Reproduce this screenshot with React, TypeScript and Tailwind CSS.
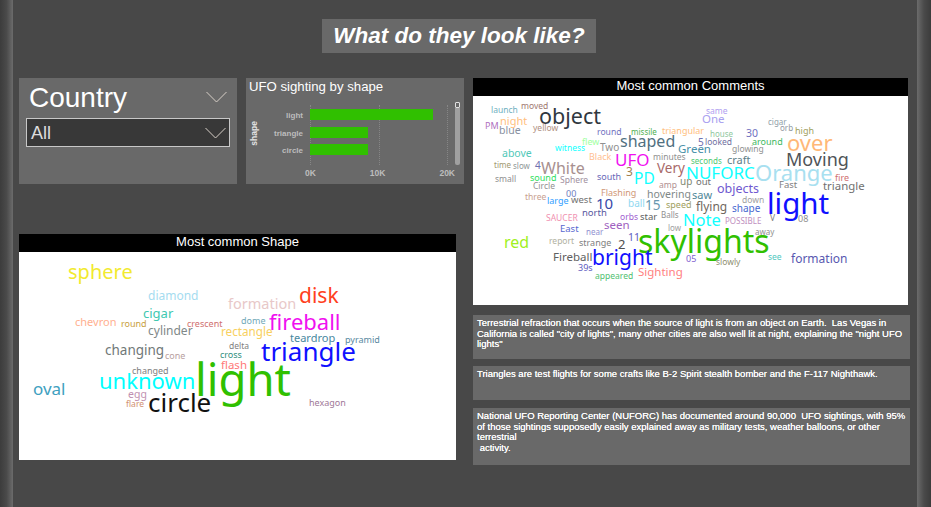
import type { ReactNode } from "react";

type Word = [string, number, number, number, string];

const shapeWords: Word[] = [
  ["sphere", 68, 272, 20, "#f2ea30"],
  ["diamond", 148, 296, 12, "#a5dcf0"],
  ["formation", 228, 303, 14.5, "#e8c8c8"],
  ["disk", 299, 295, 21, "#ff4020"],
  ["cigar", 143, 313, 13, "#40c8b0"],
  ["chevron", 75, 321, 11, "#ffb090"],
  ["round", 121, 323, 9, "#c8a040"],
  ["crescent", 187, 323, 9, "#d07070"],
  ["cylinder", 148, 331, 12, "#808888"],
  ["rectangle", 221, 332, 11.7, "#f8d060"],
  ["dome", 241, 320, 9, "#70a8b8"],
  ["fireball", 269, 321, 22, "#f010f0"],
  ["teardrop", 290, 337, 11, "#4888a0"],
  ["pyramid", 345, 339, 9, "#5888a0"],
  ["delta", 229, 346, 8.5, "#808080"],
  ["cross", 220, 354, 9, "#309080"],
  ["flash", 221, 365, 11.5, "#ff7878"],
  ["changing", 105, 351, 13.5, "#707878"],
  ["cone", 165, 355, 9, "#b8a0a0"],
  ["triangle", 261, 351, 26, "#1010ff"],
  ["changed", 132, 370, 9, "#808080"],
  ["unknown", 99, 380, 22, "#00ffff"],
  ["light", 195, 379, 45.5, "#30c000"],
  ["oval", 33, 388, 17, "#40a0c0"],
  ["egg", 128, 394, 10.5, "#c090b0"],
  ["flare", 126, 404, 8.5, "#d09070"],
  ["circle", 148, 402, 26, "#111111"],
  ["hexagon", 309, 402, 9, "#a07898"],
];

const commentWords: Word[] = [
  ["launch", 491, 110, 8.5, "#70b0c0"],
  ["moved", 521, 106, 8.5, "#a07870"],
  ["object", 539, 116, 21.5, "#303840"],
  ["night", 500, 120, 11, "#ffc080"],
  ["PM", 485, 125, 9, "#b070c0"],
  ["blue", 499, 130, 10.5, "#8890a0"],
  ["yellow", 533, 128, 8.5, "#b09080"],
  ["round", 597, 132, 8.6, "#7070c0"],
  ["missile", 631, 132, 8, "#50b050"],
  ["triangular", 662, 130, 9, "#ffc080"],
  ["flew", 582, 141, 9, "#a0ffa0"],
  ["witness", 555, 148, 8.5, "#10ffff"],
  ["Two", 600, 147, 10, "#909090"],
  ["shaped", 620, 141, 16, "#507080"],
  ["Green", 678, 149, 11.5, "#4890a8"],
  ["5", 698, 142, 10, "#7070b0"],
  ["looked", 705, 142, 8.5, "#7070a0"],
  ["same", 706, 111, 8.5, "#b0a0f0"],
  ["One", 702, 119, 11.5, "#a8a0f0"],
  ["cigar", 768, 122, 8, "#90a0a8"],
  ["orb", 780, 128, 8, "#9098a0"],
  ["high", 795, 130, 9, "#a0a060"],
  ["house", 710, 134, 8, "#90c8a0"],
  ["30", 746, 133, 10.5, "#7070c0"],
  ["around", 752, 141, 9, "#40b860"],
  ["over", 787, 142, 22, "#ffb878"],
  ["glowing", 732, 149, 8.5, "#909090"],
  ["seconds", 691, 161, 8, "#50c870"],
  ["craft", 727, 159, 11, "#608088"],
  ["Moving", 786, 159, 18, "#505458"],
  ["above", 502, 153, 10.5, "#50c8b8"],
  ["time", 494, 165, 8, "#a09870"],
  ["slow", 513, 166, 8, "#909898"],
  ["4", 535, 165, 10, "#7070b0"],
  ["White", 541, 168, 16, "#a89090"],
  ["Black", 589, 156, 9, "#ffc090"],
  ["UFO", 615, 159, 17, "#f010f0"],
  ["minutes", 653, 157, 8.5, "#909090"],
  ["Very", 657, 169, 13.5, "#a86868"],
  ["3", 626, 172, 12, "#a08050"],
  ["PD", 634, 179, 15.5, "#10ffff"],
  ["NUFORC", 686, 172, 17, "#10ffff"],
  ["Orange", 755, 172, 22, "#a8e0f0"],
  ["fire", 835, 177, 9, "#d07070"],
  ["Fast", 779, 185, 9.5, "#808080"],
  ["triangle", 823, 186, 11.4, "#707070"],
  ["up", 680, 181, 10, "#808870"],
  ["amp", 659, 185, 8.5, "#b09090"],
  ["out", 696, 182, 9.5, "#707070"],
  ["small", 495, 179, 8.5, "#909090"],
  ["sound", 530, 177, 9, "#30e060"],
  ["Sphere", 560, 180, 8.5, "#a090a0"],
  ["south", 597, 176, 9, "#6868b8"],
  ["Circle", 533, 186, 8.5, "#909090"],
  ["objects", 717, 189, 12.5, "#7058d0"],
  ["light", 767, 203, 29.5, "#1010ff"],
  ["down", 742, 200, 8.5, "#a0a0a0"],
  ["flying", 696, 207, 12, "#706860"],
  ["shape", 732, 208, 10, "#4868d0"],
  ["saw", 692, 194, 11, "#508898"],
  ["hovering", 647, 194, 10.5, "#808888"],
  ["Flashing", 601, 192, 9, "#d09878"],
  ["00", 566, 193, 9, "#7080c0"],
  ["three", 525, 197, 8.5, "#c8a090"],
  ["large", 547, 200, 9, "#30a0ff"],
  ["west", 571, 200, 9.5, "#707070"],
  ["10", 596, 203, 15, "#3848a8"],
  ["ball", 628, 203, 10, "#90d8f0"],
  ["15", 645, 206, 13.5, "#6898b0"],
  ["speed", 666, 204, 9, "#a0a060"],
  ["SAUCER", 546, 218, 8.5, "#f090b0"],
  ["north", 582, 213, 9.5, "#5858a0"],
  ["orbs", 620, 217, 8.5, "#a060d0"],
  ["star", 640, 217, 9.5, "#606060"],
  ["Balls", 661, 215, 8, "#909090"],
  ["Note", 683, 220, 16.5, "#10ffff"],
  ["POSSIBLE", 725, 221, 8, "#c090c0"],
  ["V", 770, 218, 8.5, "#808080"],
  ["08", 798, 218, 9, "#909090"],
  ["skylights", 638, 241, 32, "#30c000"],
  ["seen", 604, 225, 11.5, "#a060c0"],
  ["low", 668, 228, 8, "#a0a0a0"],
  ["away", 755, 232, 8, "#909090"],
  ["East", 560, 229, 9.5, "#5868d0"],
  ["near", 586, 232, 8, "#9090d0"],
  ["11", 628, 237, 10.5, "#6060c0"],
  ["2", 618, 244, 13, "#505050"],
  ["red", 504, 242, 16, "#a0f020"],
  ["report", 549, 241, 8.5, "#b0b0a0"],
  ["strange", 579, 242, 9, "#808080"],
  ["Fireball", 553, 257, 11.5, "#606060"],
  ["bright", 592, 257, 21, "#1010ff"],
  ["05", 686, 258, 9, "#8060d0"],
  ["slowly", 716, 262, 8.5, "#909070"],
  ["see", 768, 257, 8.5, "#50c8c0"],
  ["formation", 791, 259, 12, "#5858b0"],
  ["39s", 578, 267, 9, "#6060c0"],
  ["appeared", 595, 276, 8.5, "#50c070"],
  ["Sighting", 638, 272, 11.5, "#ff8080"],
];

const bars = [
  { label: "light", width: 123 },
  { label: "triangle", width: 58 },
  { label: "circle", width: 58 },
];

const WordCloud = ({ words, originX, originY }: { words: Word[]; originX: number; originY: number }) => (
  <div className="relative flex-1 bg-white font-['Noto_Sans',sans-serif]">
    {words.map(([text, x, y, size, color]) => (
      <span
        key={text}
        className="absolute -translate-y-1/2 whitespace-nowrap leading-none"
        style={{ left: x - originX, top: y - originY, fontSize: size, color }}
      >
        {text}
      </span>
    ))}
  </div>
);

const CardHeader = ({ title }: { title: string }) => (
  <div className="h-[18px] bg-black text-center text-[13px] leading-[16px] text-white">{title}</div>
);

const Note = ({ className, children }: { className: string; children: ReactNode }) => (
  <div className={`bg-[#696969] pl-1 pt-[3px] text-[9.5px] leading-[10.7px] text-white [text-shadow:0_0_0.6px_#ffffff] ${className}`}>
    {children}
  </div>
);

const Chevron = () => (
  <svg viewBox="0 0 21 12" fill="none" className="h-[12px] w-[21px]">
    <path d="M0.5 1 L10.5 11 L20.5 1" stroke="#d8d0c8" strokeWidth="1" />
  </svg>
);

const Chart = () => (
  <div className="h-[106px] w-[218px] bg-[#696969] pl-[3px] pt-[1px]">
    <div className="text-[13.2px] leading-[15px] text-white">UFO sighting by shape</div>
    <div className="mt-[11px] flex h-[72px]">
      <div className="flex h-[56px] w-[10px] items-center justify-center">
        <span className="-rotate-90 text-[8.5px] font-bold text-[#e4e4e4]">shape</span>
      </div>
      <div className="flex w-[44px] flex-col items-end gap-[6.5px] pt-[5px] text-[8px] font-bold leading-[11px] text-[#bdbdbd]">
        {bars.map((b) => (
          <span key={b.label} className="h-[11px]">{b.label}</span>
        ))}
      </div>
      <div className="ml-[7px] w-[138px]">
        <div className="relative h-[60px]">
          <div className="absolute left-0 top-0 h-full border-l border-dotted border-[#868686]" />
          <div className="absolute left-[69px] top-0 h-full border-l border-dotted border-[#868686]" />
          <div className="absolute left-[137px] top-0 h-full border-l border-dotted border-[#868686]" />
          <div className="relative flex flex-col gap-[6.5px] pt-[4px]">
            {bars.map((b) => (
              <div key={b.label} className="h-[11px] bg-[#30c000]" style={{ width: b.width }} />
            ))}
          </div>
        </div>
        <div className="mt-[3px] flex justify-between text-[8.5px] font-bold leading-[11px] text-[#bdbdbd]">
          <span className="-ml-[5px]">0K</span>
          <span>10K</span>
          <span className="-mr-[7px]">20K</span>
        </div>
      </div>
      <div className="ml-[7px] -mt-[3px] flex h-[63px] w-[5px] flex-col">
        <div className="h-[6px] rounded-[1px] border border-[#e0e0e0] bg-[#696969]" />
        <div className="h-[57px] rounded-b-[2px] bg-[#a0a0a0]" />
      </div>
    </div>
  </div>
);

const Slicer = () => (
  <div className="h-[106px] w-[218px] bg-[#696969] pl-[7px] pr-[7px]">
    <div className="flex h-[40px] items-center justify-between pb-[3px] pl-[3px] pr-[3px]">
      <span className="pt-[3px] text-[28px] leading-none text-white">Country</span>
      <Chevron />
    </div>
    <div className="flex h-[29px] items-center justify-between border border-[#c8c8c8] bg-[#383838] pl-1 pr-[3px]">
      <span className="text-[18px] leading-none text-[#dcdcdc]">All</span>
      <Chevron />
    </div>
  </div>
);

export default function App() {
  return (
    <div className="flex h-[507px] w-[931px] overflow-hidden bg-[#484848] font-['Liberation_Sans',Arial,sans-serif]">
      <div className="h-full w-[13px] bg-gradient-to-r from-[#3c3c3c] via-[#4a4a4a] to-[#6c6c6c]" />

      <div className="flex w-[904px] flex-col pt-[19px]">
        <div className="ml-[309px] flex h-[34px] w-[274px] items-center justify-center bg-[#696969] text-[22.5px] font-bold italic text-white">
          What do they look like?
        </div>

        <div className="mt-[25px] flex">
          <div className="ml-[6px] flex w-[445px] flex-col">
            <div className="flex gap-[9px]">
              <Slicer />
              <Chart />
            </div>
            <div className="mt-[50px] flex h-[226px] w-[437px] flex-col">
              <CardHeader title="Most common Shape" />
              <WordCloud words={shapeWords} originX={19} originY={252} />
            </div>
          </div>

          <div className="ml-[9px] flex w-[437px] flex-col">
            <div className="flex h-[227px] w-[435px] flex-col">
              <CardHeader title="Most common Comments" />
              <WordCloud words={commentWords} originX={473} originY={96} />
            </div>
            <Note className="mt-[10px] h-[44px]">
              Terrestrial refraction that occurs when the source of light is from an object on Earth.&nbsp; Las Vegas in California is called "city of lights", many other cities are also well lit at night, explaining the "night UFO lights"
            </Note>
            <Note className="mt-[7px] h-[34px]">
              Triangles are test flights for some crafts like B-2 Spirit stealth bomber and the F-117 Nighthawk.
            </Note>
            <Note className="mt-[8px] h-[57px]">
              National UFO Reporting Center (NUFORC) has documented around 90,000&nbsp; UFO sightings, with 95% of those sightings supposedly easily explained away as military tests, weather balloons, or other terrestrial
              <br />
              &nbsp;activity.
            </Note>
          </div>
        </div>
      </div>

      <div className="h-full w-[14px] bg-gradient-to-r from-[#6c6c6c] via-[#4a4a4a] to-[#3c3c3c]" />
    </div>
  );
}
